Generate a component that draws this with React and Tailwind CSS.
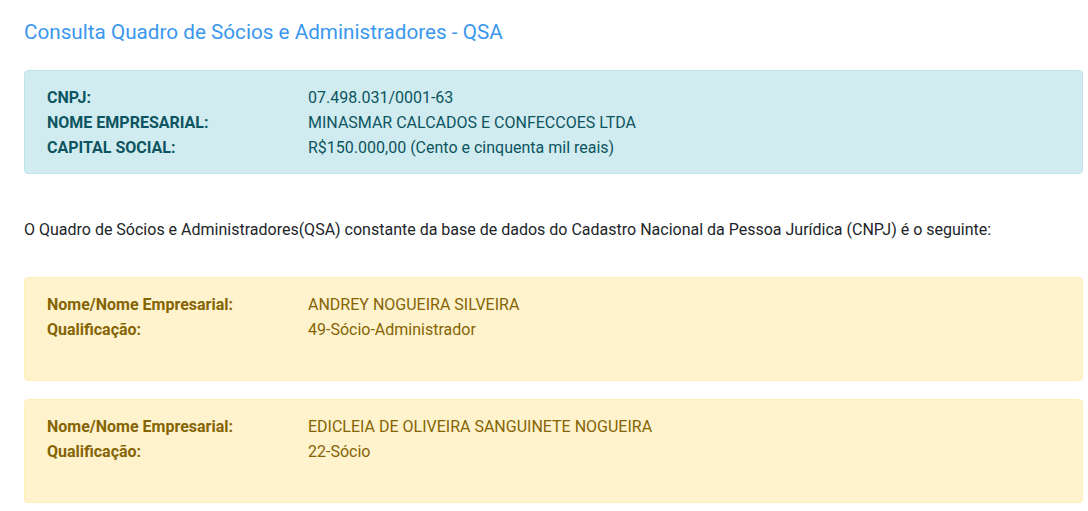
import React from 'react';

const socios = [
  { nome: 'ANDREY NOGUEIRA SILVEIRA', qualificacao: '49-Sócio-Administrador' },
  { nome: 'EDICLEIA DE OLIVEIRA SANGUINETE NOGUEIRA', qualificacao: '22-Sócio' },
];

function Row({ label, value }) {
  return (
    <div className="flex">
      <div className="w-[261px] shrink-0 font-bold">{label}</div>
      <div>{value}</div>
    </div>
  );
}

export default function App() {
  return (
    <div className="bg-white min-h-screen pl-6 pr-[5px] pt-[18px] text-[16px] leading-[25px] text-[#212529]" style={{ fontFamily: 'Roboto, "Liberation Sans", sans-serif' }}>
      <h1 className="text-[20.7px] leading-[28px] text-[#3a97ee] mb-6">Consulta Quadro de Sócios e Administradores - QSA</h1>

      <div className="bg-[#d1ecf1] border border-[#bee5eb] rounded text-[#0c5460] px-[22px] pt-[14px] pb-[13px]">
        <Row label="CNPJ:" value="07.498.031/0001-63" />
        <Row label="NOME EMPRESARIAL:" value="MINASMAR CALCADOS E CONFECCOES LTDA" />
        <Row label="CAPITAL SOCIAL:" value="R$150.000,00 (Cento e cinquenta mil reais)" />
      </div>

      <p className="mt-[43px] mb-[35px]">
        O Quadro de Sócios e Administradores(QSA) constante da base de dados do Cadastro Nacional da Pessoa Jurídica (CNPJ) é o seguinte:
      </p>

      <div className="flex flex-col gap-[18px]">
        {socios.map(s => (
          <div key={s.nome} className="bg-[#fff3cd] border border-[#ffeeba] rounded text-[#856404] px-[22px] pt-[14px] h-[104px]">
            <Row label="Nome/Nome Empresarial:" value={s.nome} />
            <Row label="Qualificação:" value={s.qualificacao} />
          </div>
        ))}
      </div>
    </div>
  );
}
